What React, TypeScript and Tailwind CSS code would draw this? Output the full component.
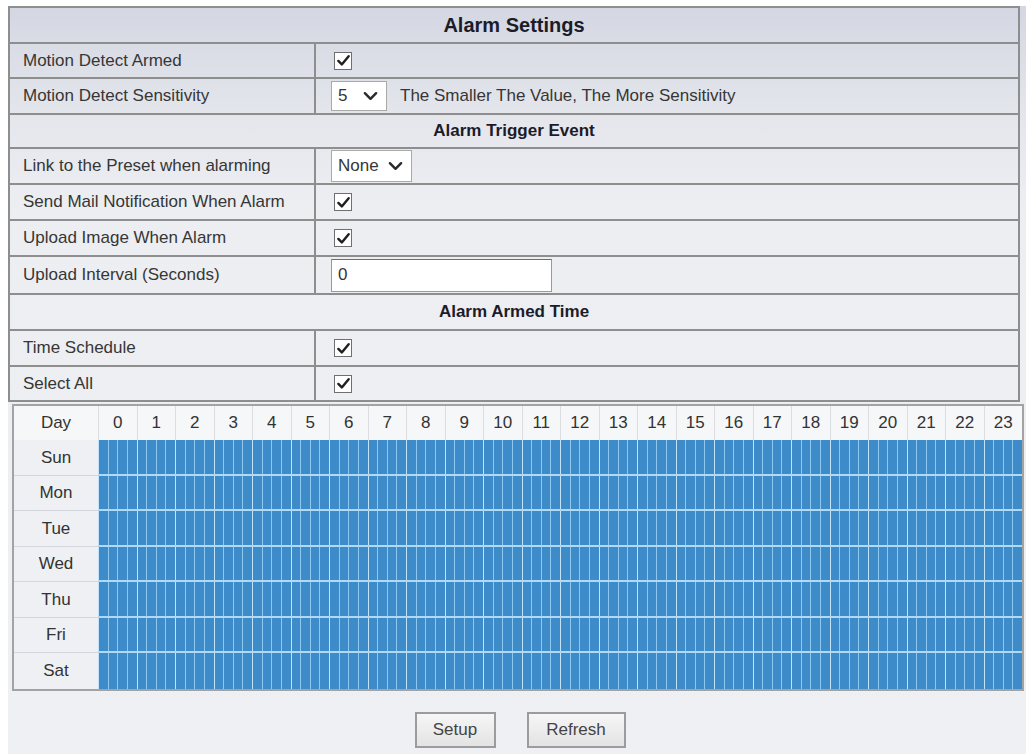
import React from 'react';

const HOURS = Array.from({ length: 24 }, (_, i) => i);
const DAYS = ['Sun', 'Mon', 'Tue', 'Wed', 'Thu', 'Fri', 'Sat'];

function CheckBox() {
  return (
    <div className="flex h-[18px] w-[18px] items-center justify-center border border-[#6f6f6f] bg-white">
      <svg viewBox="0 0 16 16" className="h-[15px] w-[15px]">
        <path d="M2.5 8.5 L6.2 12.2 L13.5 3.5" fill="none" stroke="#1f1f1f" strokeWidth="2.6" strokeLinecap="round" strokeLinejoin="round" />
      </svg>
    </div>
  );
}

function Chevron() {
  return (
    <svg viewBox="0 0 16 10" className="h-[10px] w-[15px]">
      <path d="M2 2 L8 8 L14 2" fill="none" stroke="#2a2a2a" strokeWidth="2.6" strokeLinecap="round" strokeLinejoin="round" />
    </svg>
  );
}

function SelectBox({ value, className }: { value: string; className: string }) {
  return (
    <div className={`flex items-center justify-between border border-[#a9a9a9] bg-white pl-[6px] pr-[8px] ${className}`}>
      <span>{value}</span>
      <Chevron />
    </div>
  );
}

function Row({ label, h, children }: { label: string; h: string; children?: React.ReactNode }) {
  return (
    <div className={`flex border-b-2 border-[#8e8e8e] ${h}`}>
      <div className="flex w-[306px] shrink-0 items-center border-r-2 border-[#8e8e8e] pl-[13px]">{label}</div>
      <div className="flex flex-1 items-center gap-[13px] pl-[18px]">{children}</div>
    </div>
  );
}

function SectionTitle({ title, h, big }: { title: string; h: string; big?: boolean }) {
  return (
    <div className={`flex items-center justify-center border-b-2 border-[#8e8e8e] font-bold text-[#1c1c28] ${h} ${big ? 'text-[20px]' : 'text-[17px]'}`}>
      {title}
    </div>
  );
}

function ScheduleGrid() {
  return (
    <div className="ml-[4px] mt-[2px] w-[1012px] border-2 border-[#a3a3a3] text-[17px] text-[#333]">
      <div className="flex h-[34px] bg-[#f6f7f9]">
        <div className="flex w-[84px] shrink-0 items-center justify-center">Day</div>
        {HOURS.map((h) => (
          <div key={h} className="flex flex-1 items-center justify-center border-l border-[#dcdde0] font-medium">
            {h}
          </div>
        ))}
      </div>
      {DAYS.map((d, i) => (
        <div key={d} className="flex h-[35.5px]">
          <div className={`flex w-[84px] shrink-0 items-center justify-center bg-[#eef0f4] ${i < DAYS.length - 1 ? 'border-b border-[#d3d6dc]' : ''}`}>
            {d}
          </div>
          <div className={`flex flex-1 ${i < DAYS.length - 1 ? 'border-b-2 border-[#b0d9f5]' : ''}`}>
            {HOURS.map((h) => (
              <div key={h} className="flex flex-1 border-l border-[#c3e3f8]">
                {[0, 1, 2, 3].map((q) => (
                  <div key={q} className={`flex-1 bg-[#3d8bc9] ${q > 0 ? 'border-l border-[#8cc8f0]' : ''}`} />
                ))}
              </div>
            ))}
          </div>
        </div>
      ))}
    </div>
  );
}

export default function App() {
  return (
    <div className="h-[754px] w-[1028px] overflow-hidden bg-white font-['Liberation_Sans',Arial,sans-serif] text-[17px] text-[#363636]">
      <div className="ml-[8px] mt-[6px] h-[748px] w-[1018px] bg-[linear-gradient(to_bottom,#d4d7e2_0px,#e4e6ec_110px,#eceef2_200px,#eef0f3_100%)]">
        <div className="w-[1012px] border-x-2 border-t-2 border-[#8e8e8e]">
          <SectionTitle title="Alarm Settings" h="h-[36px]" big />
          <Row label="Motion Detect Armed" h="h-[35px]">
            <CheckBox />
          </Row>
          <Row label="Motion Detect Sensitivity" h="h-[36px]">
            <SelectBox value="5" className="ml-[-3px] h-[30px] w-[56px]" />
            <span>The Smaller The Value, The More Sensitivity</span>
          </Row>
          <SectionTitle title="Alarm Trigger Event" h="h-[34px]" />
          <Row label="Link to the Preset when alarming" h="h-[36px]">
            <SelectBox value="None" className="ml-[-3px] h-[32px] w-[81px]" />
          </Row>
          <Row label="Send Mail Notification When Alarm" h="h-[36px]">
            <CheckBox />
          </Row>
          <Row label="Upload Image When Alarm" h="h-[36px]">
            <CheckBox />
          </Row>
          <Row label="Upload Interval (Seconds)" h="h-[38px]">
            <div className="ml-[-3px] flex h-[33px] w-[221px] items-center border border-[#9a9a9a] border-t-[#6e6e6e] bg-white pl-[6px]">0</div>
          </Row>
          <SectionTitle title="Alarm Armed Time" h="h-[36px]" />
          <Row label="Time Schedule" h="h-[36px]">
            <CheckBox />
          </Row>
          <Row label="Select All" h="h-[35px]">
            <CheckBox />
          </Row>
        </div>
        <ScheduleGrid />
        <div className="mt-[21px] flex justify-center gap-[31px] pl-[6px]">
          <button className="h-[36px] w-[81px] border-2 border-[#9c9c9c] bg-[linear-gradient(to_bottom,#f6f6f6,#e3e3e3)] text-[17px] text-[#444]">
            Setup
          </button>
          <button className="h-[36px] w-[99px] border-2 border-[#9c9c9c] bg-[linear-gradient(to_bottom,#f6f6f6,#e3e3e3)] text-[17px] text-[#444]">
            Refresh
          </button>
        </div>
      </div>
    </div>
  );
}
